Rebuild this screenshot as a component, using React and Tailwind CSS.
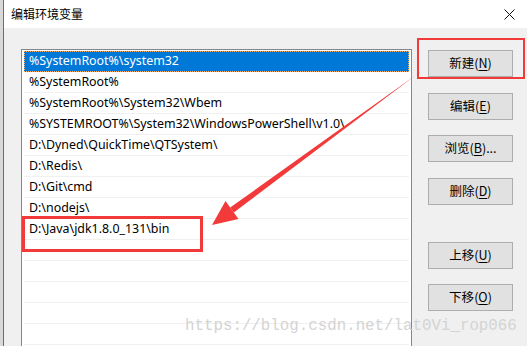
import React from "react";

const rows = [
  "%SystemRoot%\\system32",
  "%SystemRoot%",
  "%SystemRoot%\\System32\\Wbem",
  "%SYSTEMROOT%\\System32\\WindowsPowerShell\\v1.0\\",
  "D:\\Dyned\\QuickTime\\QTSystem\\",
  "D:\\Redis\\",
  "D:\\Git\\cmd",
  "D:\\nodejs\\",
  "D:\\Java\\jdk1.8.0_131\\bin",
  "",
  "",
  "",
  "",
  "",
];

const buttons = [
  { label: "新建", key: "N", mt: "mt-[1px]" },
  { label: "编辑", key: "E", mt: "mt-[16px]" },
  { label: "浏览", key: "B", suffix: "...", mt: "mt-[15px]" },
  { label: "删除", key: "D", mt: "mt-[16px]" },
  { label: "上移", key: "U", mt: "mt-[37px]" },
  { label: "下移", key: "O", mt: "mt-[15px]" },
];

function Btn({ b }) {
  return (
    <div
      className={`${b.mt} shrink-0 h-[27px] w-[85px] border border-[#adadad] bg-[#e1e1e1] flex items-center justify-center text-[12.5px] text-black`}
    >
      <span className="font-['Noto_Sans_CJK_SC',sans-serif] leading-none">
        {b.label}(<span className="underline underline-offset-2">{b.key}</span>){b.suffix || ""}
      </span>
    </div>
  );
}

export default function App() {
  return (
    <div className="relative w-[527px] h-[346px] overflow-hidden flex bg-[#e6e6e6]">
      <div className="w-[3px] shrink-0 bg-[#d9d9d9]" />
      <div className="flex-1 min-h-0 flex flex-col border-l border-[#1883d7]">
        <div className="shrink-0 h-[28px] bg-white flex items-center justify-between pl-[7px] pr-[12px]">
          <span className="font-['Noto_Sans_CJK_SC',sans-serif] text-[12px] text-black leading-none">
            编辑环境变量
          </span>
          <svg width="11" height="11" viewBox="0 0 11 11">
            <path d="M0.5 0.5 L10.5 10.5 M10.5 0.5 L0.5 10.5" stroke="#111" strokeWidth="1" />
          </svg>
        </div>
        <div className="flex-1 min-h-0 overflow-hidden bg-[#f0f0f0] flex items-start pl-[17px] pt-[21px]">
          <div className="shrink-0 w-[391px] h-[400px] border border-[#828790] bg-white pt-[1px] px-[2px]">
            {rows.map((r, i) => (
              <div
                key={i}
                className={
                  i === 0
                    ? "h-[21px] bg-[#0078d7] text-white flex items-center pl-[5px] outline outline-1 outline-dotted outline-offset-[-1px] outline-[#f5b070]"
                    : "h-[21px] border-b border-[#f0f0f0] text-black flex items-center pl-[5px]"
                }
              >
                <span className="font-['Noto_Sans',sans-serif] text-[12.4px] leading-none whitespace-nowrap">
                  {r}
                </span>
              </div>
            ))}
          </div>
          <div className="ml-[16px] flex flex-col">
            {buttons.map((b, i) => (
              <Btn key={i} b={b} />
            ))}
          </div>
        </div>
      </div>

      {/* annotations */}
      <div className="absolute left-[417px] top-[38px] w-[108px] h-[41px] border-2 border-[#f33a3a]" />
      <div className="absolute left-[22px] top-[216px] w-[181px] h-[36px] border-[3px] border-[#f33a3a]" />
      <svg className="absolute left-0 top-0" width="527" height="346" viewBox="0 0 527 346">
        <polygon
          points="420.2,71.8 419.8,72.2 230.2,207.6 233.8,212.4"
          fill="#f33a3a"
        />
        <polygon points="212,225 225.5,201 238.5,219" fill="#f33a3a" />
      </svg>
      <div className="absolute left-[185px] top-[319px] font-['Liberation_Mono',monospace] text-[15.8px] leading-none text-[#d4d4d4] whitespace-nowrap">
        https://blog.csdn.net/lat0Vi_rop066
      </div>
    </div>
  );
}
